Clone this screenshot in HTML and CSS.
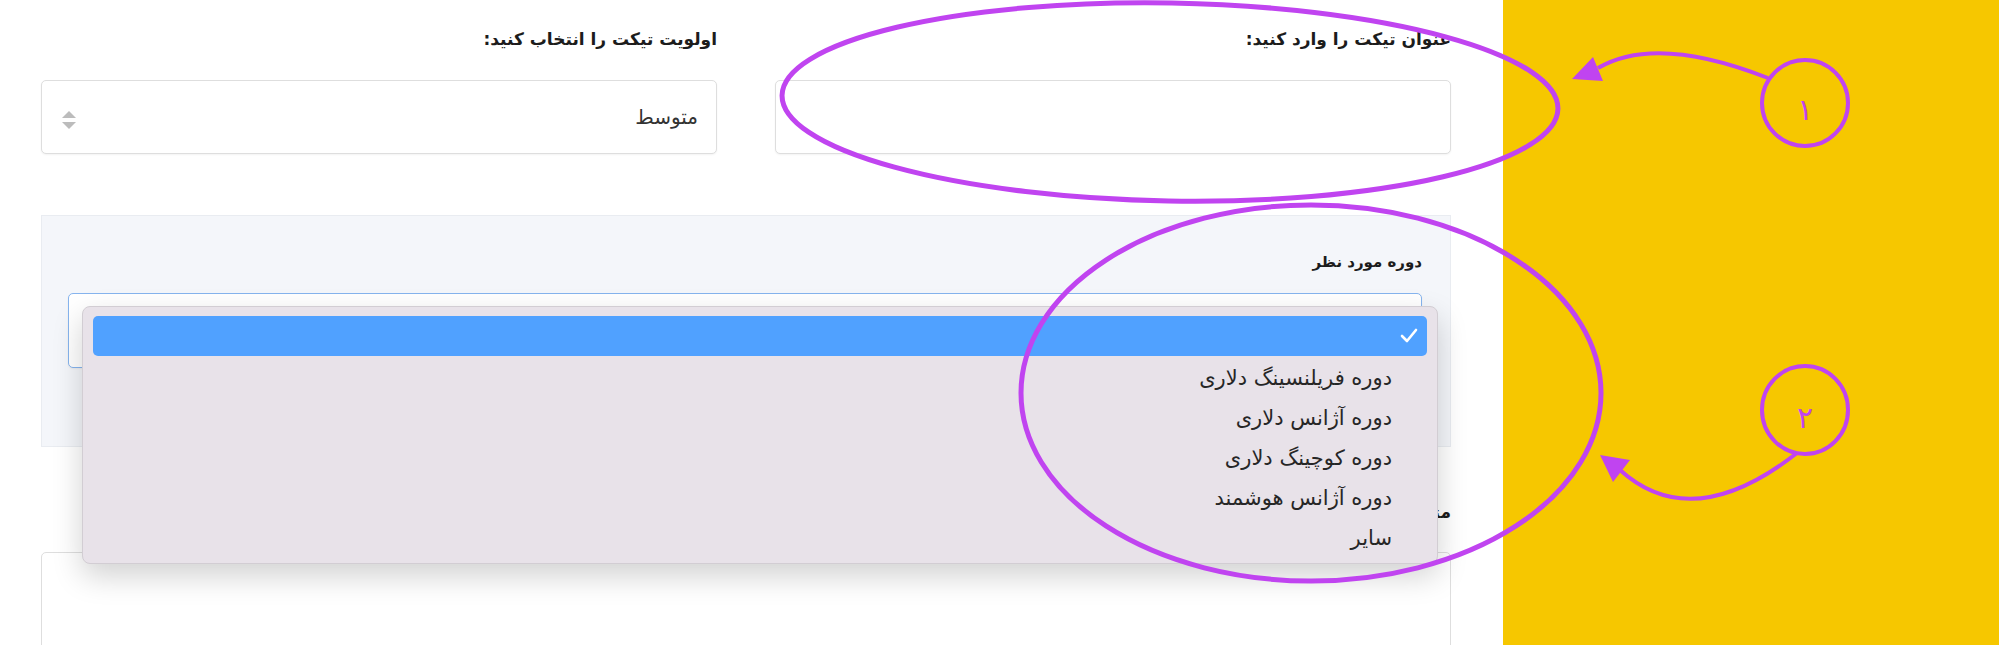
FILE: index.html
```html
<!DOCTYPE html>
<html lang="fa">
<head>
  <meta charset="UTF-8" />
  <meta name="viewport" content="width=device-width, initial-scale=1.0" />
  <title>ارسال تیکت</title>
  <link rel="stylesheet" href="styles.css">
</head>
<body>
<div class="page">
  <main class="content" dir="rtl">
    <div class="row">
      <div class="field">
        <label class="label">عنوان تیکت را وارد کنید:</label>
        <input class="input" type="text" />
      </div>
      <div class="field">
        <label class="label">اولویت تیکت را انتخاب کنید:</label>
        <div class="input select">
          <span>متوسط</span>
          <svg class="updown" width="14" height="18" viewBox="0 0 14 18">
            <path d="M7 0 L14 7 L0 7 Z" fill="#bcbcbc"/>
            <path d="M0 11 L14 11 L7 18 Z" fill="#bcbcbc"/>
          </svg>
        </div>
      </div>
    </div>

    <div class="panel">
      <label class="label small">دوره مورد نظر</label>
      <div class="input focus"></div>
    </div>

    <label class="label message">متن تیکت را وارد کنید:</label>
    <textarea class="textarea"></textarea>
  </main>
  <aside class="side"></aside>

  <div class="menu" dir="rtl">
    <div class="item active">
      <svg width="18" height="16" viewBox="0 0 18 16">
        <polyline points="2,8 7,13 16,2" fill="none" stroke="#fff" stroke-width="2.6" stroke-linecap="round" stroke-linejoin="round"/>
      </svg>
    </div>
    <div class="item">دوره فریلنسینگ دلاری</div>
    <div class="item">دوره آژانس دلاری</div>
    <div class="item">دوره کوچینگ دلاری</div>
    <div class="item">دوره آژانس هوشمند</div>
    <div class="item">سایر</div>
  </div>

  <svg class="notes" width="1999" height="645" viewBox="0 0 1999 645">
    <g fill="none" stroke="#c044f0" stroke-width="5">
      <ellipse cx="1170" cy="102" rx="388" ry="99" transform="rotate(1 1170 102)"/>
      <ellipse cx="1311" cy="393" rx="290" ry="188"/>
      <ellipse cx="1805" cy="103" rx="43" ry="43" stroke-width="4"/>
      <ellipse cx="1805" cy="410" rx="43" ry="44" stroke-width="4"/>
      <path d="M1768 78 Q1656 34 1598 68" stroke-width="4"/>
      <path d="M1797 453 Q1692 535 1620 470" stroke-width="4"/>
    </g>
    <g fill="#c044f0">
      <polygon points="1572,79 1593,57 1603,81"/>
      <polygon points="1600,455 1630,460 1613,482"/>
      <text x="1805" y="120" class="digit">۱</text>
      <text x="1805" y="428" class="digit">۲</text>
    </g>
  </svg>
</div>
</body>
</html>
```

FILE: styles.css
```css
body {
  margin: 0;
  font-family: "DejaVu Sans", sans-serif;
  background: #fff;
  color: #222;
}
.page {
  position: relative;
  display: flex;
  height: 645px;
  overflow: hidden;
}
.content {
  width: 1503px;
  flex-shrink: 0;
  box-sizing: border-box;
  padding: 24px 52px 0 41px;
}
.side {
  flex: 1;
  background: #f6c700;
}
.row {
  display: grid;
  grid-template-columns: 1fr 1fr;
  gap: 58px;
}
.label {
  display: block;
  font-size: 17px;
  font-weight: bold;
  line-height: 30px;
  color: #1c1c1c;
}
.field .label {
  margin-bottom: 26px;
}
.input {
  display: block;
  width: 100%;
  height: 74px;
  box-sizing: border-box;
  border: 1px solid #dedede;
  border-radius: 5px;
  background: #fff;
  box-shadow: 0 1px 2px rgba(0, 0, 0, 0.05);
}
.select {
  display: flex;
  align-items: center;
  justify-content: space-between;
  padding: 0 18px 0 20px;
  font-size: 20px;
  color: #333;
}
.updown {
  margin-top: 6px;
}
.panel {
  margin-top: 61px;
  height: 232px;
  box-sizing: border-box;
  padding: 31px 28px 0 26px;
  background: #f4f6fa;
  border: 1px solid #e9ecf1;
}
.label.small {
  font-size: 15px;
  margin-bottom: 16px;
}
.focus {
  height: 75px;
  border-color: #86b4ee;
}
.label.message {
  margin-top: 50px;
  margin-bottom: 25px;
}
.textarea {
  display: block;
  width: 100%;
  height: 200px;
  box-sizing: border-box;
  border: 1px solid #dedede;
  border-radius: 5px;
  resize: none;
}
.menu {
  position: absolute;
  left: 82px;
  top: 306px;
  width: 1356px;
  height: 258px;
  box-sizing: border-box;
  padding: 9px 10px 0;
  background: #e8e2e9;
  border: 1px solid #d2cdd3;
  border-radius: 8px;
  box-shadow: 0 12px 30px rgba(0, 0, 0, 0.18);
}
.item {
  height: 40px;
  line-height: 40px;
  padding-right: 35px;
  font-size: 21px;
  color: #262626;
}
.item.active {
  display: flex;
  align-items: center;
  padding-right: 9px;
  margin-bottom: 2px;
  background: #50a1ff;
  border-radius: 5px;
}
.notes {
  position: absolute;
  left: 0;
  top: 0;
  pointer-events: none;
}
.digit {
  font-family: "DejaVu Sans", sans-serif;
  font-size: 30px;
  text-anchor: middle;
}
```
